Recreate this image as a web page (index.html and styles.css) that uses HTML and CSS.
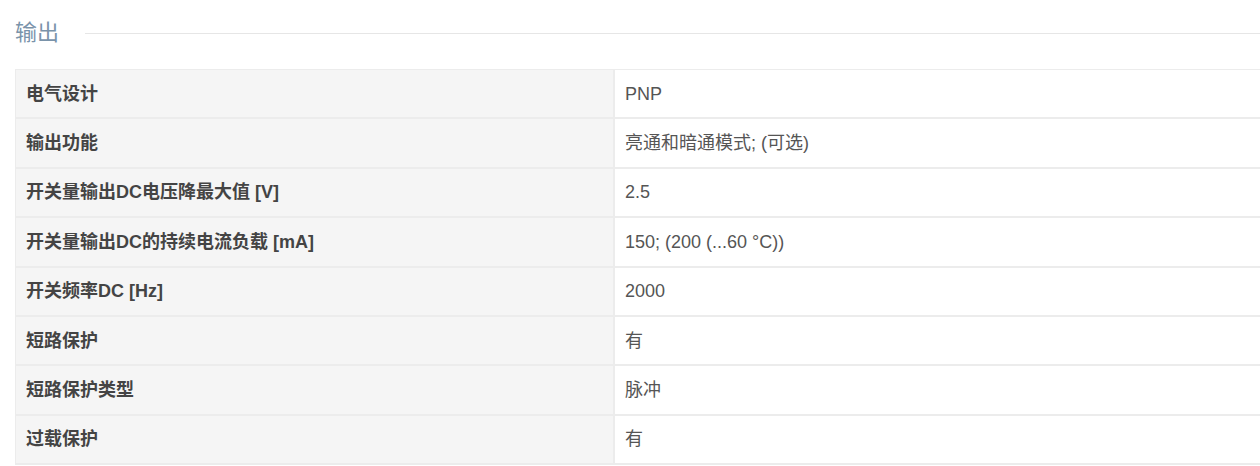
FILE: index.html
```html
<!DOCTYPE html>
<html lang="zh">
<head>
<meta charset="utf-8">
<link rel="stylesheet" href="styles.css">
</head>
<body>
<section class="spec">
  <div class="spec-head">
    <h2 class="spec-title">输出</h2>
    <div class="spec-rule"></div>
  </div>
  <table class="spec-table">
    <tbody>
      <tr><th>电气设计</th><td>PNP</td></tr>
      <tr><th>输出功能</th><td>亮通和暗通模式; (可选)</td></tr>
      <tr><th>开关量输出DC电压降最大值 [V]</th><td>2.5</td></tr>
      <tr><th>开关量输出DC的持续电流负载 [mA]</th><td>150; (200 (...60 °C))</td></tr>
      <tr><th>开关频率DC [Hz]</th><td>2000</td></tr>
      <tr><th>短路保护</th><td>有</td></tr>
      <tr><th>短路保护类型</th><td>脉冲</td></tr>
      <tr><th>过载保护</th><td>有</td></tr>
    </tbody>
  </table>
</section>
</body>
</html>
```

FILE: styles.css
```css
html, body {
  margin: 0;
  padding: 0;
  background: #ffffff;
  overflow: hidden;
}
body {
  font-family: "Liberation Sans", "Noto Sans CJK SC", sans-serif;
  font-size: 18px;
  color: #555;
}
.spec {
  padding: 18px 0 0 15px;
  width: 1280px;
}
.spec-head {
  display: flex;
  align-items: center;
  height: 30px;
  margin-bottom: 21px;
}
.spec-title {
  margin: 0;
  font-weight: normal;
  font-size: 22px;
  line-height: 30px;
  color: #7a93aa;
}
.spec-rule {
  flex: 1;
  height: 1px;
  background: #e6e6e6;
  margin-left: 26px;
}
.spec-table {
  width: 100%;
  border-collapse: collapse;
  border-top: 1px solid #ececec;
  border-left: 1px solid #ececec;
}
.spec-table tr {
  border-bottom: 2px solid #ececec;
}
.spec-table th,
.spec-table td {
  padding: 0 10px;
  height: 47.4px;
  line-height: 24px;
  text-align: left;
  vertical-align: middle;
}
.spec-table th {
  width: 577px;
  background: #f5f5f5;
  font-weight: bold;
  color: #444;
  border-right: 2px solid #ececec;
}
.spec-table td {
  background: #fff;
  color: #555;
}
```
